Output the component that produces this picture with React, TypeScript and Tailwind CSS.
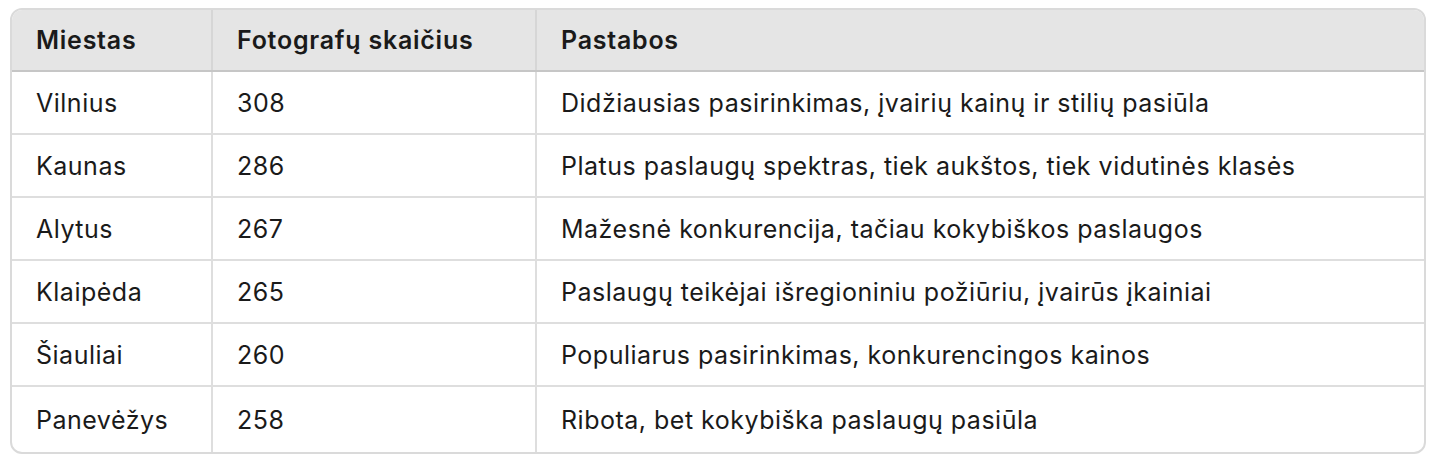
import React from "react";

const rows: [string, string, string][] = [
  ["Vilnius", "308", "Didžiausias pasirinkimas, įvairių kainų ir stilių pasiūla"],
  ["Kaunas", "286", "Platus paslaugų spektras, tiek aukštos, tiek vidutinės klasės"],
  ["Alytus", "267", "Mažesnė konkurencija, tačiau kokybiškos paslaugos"],
  ["Klaipėda", "265", "Paslaugų teikėjai išregioniniu požiūriu, įvairūs įkainiai"],
  ["Šiauliai", "260", "Populiarus pasirinkimas, konkurencingos kainos"],
  ["Panevėžys", "258", "Ribota, bet kokybiška paslaugų pasiūla"],
];

export default function App() {
  return (
    <div className="w-[1440px] h-[462px] bg-white pt-[8px] pl-[10px]" style={{ fontFamily: "Inter, 'Noto Sans', sans-serif" }}>
      <div className="w-[1416px] h-[446px] flex flex-col border-2 border-[#dadada] rounded-[12px] overflow-hidden text-[#1a1a1a] text-[25px] tracking-[0.02em]">
        <div className="grid grid-cols-[201px_324px_1fr] h-[62px] shrink-0 bg-[#e5e5e5] border-b-2 border-[#c6c6c6] font-semibold tracking-[0.03em]">
          <div className="flex items-center pl-[24px] pt-[1px] border-r-2 border-[#d6d6d6]">Miestas</div>
          <div className="flex items-center pl-[24px] pt-[1px] border-r-2 border-[#d6d6d6]">Fotografų skaičius</div>
          <div className="flex items-center pl-[24px] pt-[1px]">Pastabos</div>
        </div>
        {rows.map((r, i) => (
          <div key={i} className={`grid grid-cols-[201px_324px_1fr] ${i < rows.length - 1 ? "h-[63px] shrink-0 border-b-2 border-[#dedede]" : "flex-1"}`}>
            <div className="flex items-center pl-[24px] pt-[3px] border-r-2 border-[#dedede]">{r[0]}</div>
            <div className="flex items-center pl-[24px] pt-[3px] border-r-2 border-[#dedede]">{r[1]}</div>
            <div className="flex items-center pl-[24px] pt-[3px]">{r[2]}</div>
          </div>
        ))}
      </div>
    </div>
  );
}
